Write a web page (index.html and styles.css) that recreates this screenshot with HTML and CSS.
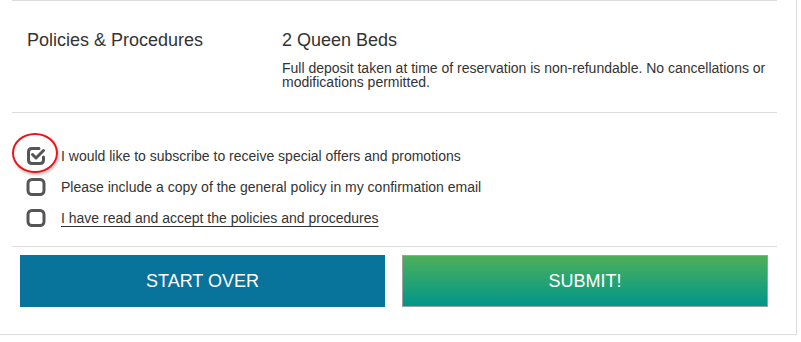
FILE: index.html
```html
<!DOCTYPE html>
<html>
<head>
<meta charset="utf-8">
<link rel="stylesheet" href="styles.css">
</head>
<body>
<div class="panel">
  <div class="inner">
    <section class="section policy">
      <div class="policy-title">Policies &amp; Procedures</div>
      <div class="policy-body">
        <div class="room">2 Queen Beds</div>
        <p class="desc">Full deposit taken at time of reservation is non-refundable. No cancellations or modifications permitted.</p>
      </div>
    </section>
    <section class="section checks">
      <label class="check-row">
        <span class="box">
          <svg width="22" height="20" viewBox="0 0 22 20">
            <path d="M13 2.5 H6 Q2.5 2.5 2.5 6 V14 Q2.5 17.5 6 17.5 H14 Q17.5 17.5 17.5 14 V11" fill="none" stroke="#555" stroke-width="3" stroke-linecap="round"/>
            <path d="M6.5 8.5 L10 12 L17.5 4.5" fill="none" stroke="#555" stroke-width="3" stroke-linecap="round" stroke-linejoin="round"/>
          </svg>
          <span class="annot"></span>
        </span>
        <span class="text">I would like to subscribe to receive special offers and promotions</span>
      </label>
      <label class="check-row">
        <span class="box">
          <svg width="22" height="20" viewBox="0 0 22 20">
            <rect x="2" y="2.5" width="16" height="15" rx="4" fill="none" stroke="#555" stroke-width="3"/>
          </svg>
        </span>
        <span class="text">Please include a copy of the general policy in my confirmation email</span>
      </label>
      <label class="check-row">
        <span class="box">
          <svg width="22" height="20" viewBox="0 0 22 20">
            <rect x="2" y="2.5" width="16" height="15" rx="4" fill="none" stroke="#555" stroke-width="3"/>
          </svg>
        </span>
        <span class="text link">I have read and accept the policies and procedures</span>
      </label>
    </section>
    <section class="section actions">
      <button class="btn btn-start">START OVER</button>
      <button class="btn btn-submit">SUBMIT!</button>
    </section>
  </div>
</div>
</body>
</html>
```

FILE: styles.css
```css
html, body {
  margin: 0;
  padding: 0;
  background: #fff;
}
body {
  font-family: "Liberation Sans", Arial, sans-serif;
  color: #333;
}
.panel {
  width: 796px;
  border-right: 1px solid #ddd;
  border-bottom: 1px solid #ddd;
}
.inner {
  margin: 0 19px 0 12px;
}
.section {
  border-top: 1px solid #ddd;
}
.policy {
  display: grid;
  grid-template-columns: 255px 1fr;
  padding: 29px 0 23px 15px;
}
.policy-title, .room {
  font-size: 18px;
  line-height: 20px;
  color: #333;
}
.desc {
  margin: 11px 0 0 0;
  font-size: 14px;
  line-height: 14px;
  color: #333;
}
.checks {
  padding: 27px 0 13px 15px;
}
.check-row {
  display: flex;
  align-items: center;
  height: 31px;
  font-size: 14px;
}
.box {
  position: relative;
  width: 34px;
  height: 20px;
  display: flex;
  align-items: center;
}
.box svg {
  display: block;
  margin-left: -1px;
}
.annot {
  position: absolute;
  left: -15px;
  top: -13px;
  width: 42px;
  height: 36px;
  border: 2px solid #e8161b;
  border-radius: 50%;
  box-shadow: 1px 2px 3px rgba(0, 0, 0, 0.25);
}
.text {
  color: #333;
}
.link {
  text-decoration: underline;
  text-underline-offset: 3px;
  text-decoration-color: #333;
}
.actions {
  display: grid;
  grid-template-columns: 365px 366px;
  column-gap: 17px;
  padding: 8px 0 27px 8px;
}
.btn {
  height: 52px;
  font-family: "Liberation Sans", Arial, sans-serif;
  font-size: 18px;
  color: #fff;
  border: 0;
  padding: 0;
  margin: 0;
}
.btn-start {
  background: #08739b;
}
.btn-submit {
  background: linear-gradient(to bottom, #4cb05a, #01968a);
  border: 1px solid #a0a0a0;
}
```
